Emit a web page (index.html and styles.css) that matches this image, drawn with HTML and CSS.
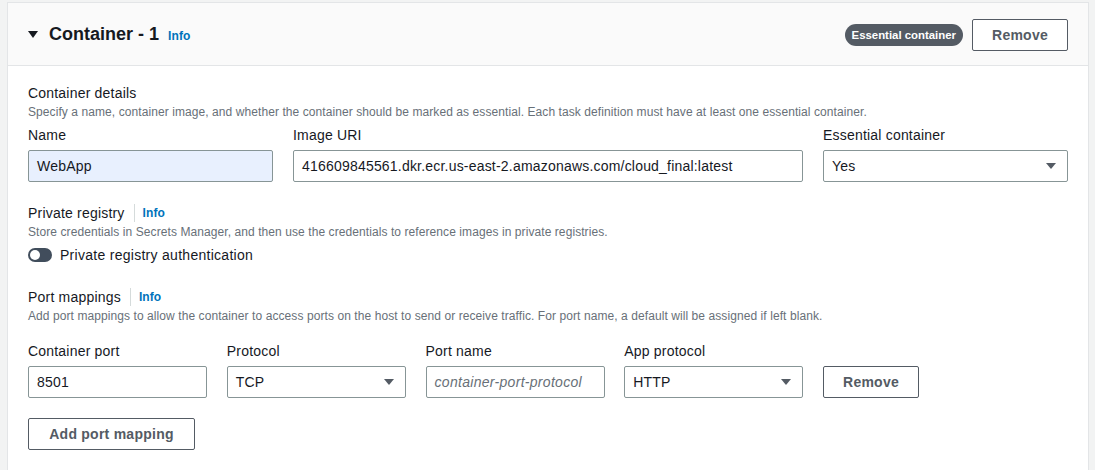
FILE: index.html
```html
<!DOCTYPE html>
<html lang="en">
<head>
<meta charset="utf-8">
<title>Container - 1</title>
<link rel="stylesheet" href="styles.css">
</head>
<body>
<div class="card">
  <div class="card-header">
    <div class="title-group">
      <svg class="caret" width="10" height="7" viewBox="0 0 10 7"><polygon points="0,0 10,0 5,7" fill="#16191f"/></svg>
      <h2 class="title">Container - 1</h2>
      <a class="info info-title">Info</a>
    </div>
    <div class="header-actions">
      <span class="badge">Essential container</span>
      <button class="btn btn-header">Remove</button>
    </div>
  </div>
  <div class="card-body">
    <section class="section">
      <div class="section-title">Container details</div>
      <div class="section-desc">Specify a name, container image, and whether the container should be marked as essential. Each task definition must have at least one essential container.</div>
      <div class="grid-top">
        <div class="field">
          <label class="label">Name</label>
          <div class="input autofill">WebApp</div>
        </div>
        <div class="field">
          <label class="label">Image URI</label>
          <div class="input">416609845561.dkr.ecr.us-east-2.amazonaws.com/cloud_final:latest</div>
        </div>
        <div class="field">
          <label class="label">Essential container</label>
          <div class="input select">Yes<svg class="arrow" width="10" height="6" viewBox="0 0 10 6"><polygon points="0,0 10,0 5,6" fill="#545b64"/></svg></div>
        </div>
      </div>
    </section>

    <section class="section section-gap-1">
      <div class="section-title">Private registry<span class="sep"></span><a class="info">Info</a></div>
      <div class="section-desc">Store credentials in Secrets Manager, and then use the credentials to reference images in private registries.</div>
      <div class="toggle-row">
        <span class="toggle"><span class="knob"></span></span>
        <span class="toggle-label">Private registry authentication</span>
      </div>
    </section>

    <section class="section section-gap-2">
      <div class="section-title">Port mappings<span class="sep"></span><a class="info">Info</a></div>
      <div class="section-desc">Add port mappings to allow the container to access ports on the host to send or receive traffic. For port name, a default will be assigned if left blank.</div>
      <div class="grid-ports">
        <div class="field">
          <label class="label">Container port</label>
          <div class="input">8501</div>
        </div>
        <div class="field">
          <label class="label">Protocol</label>
          <div class="input select">TCP<svg class="arrow" width="10" height="6" viewBox="0 0 10 6"><polygon points="0,0 10,0 5,6" fill="#545b64"/></svg></div>
        </div>
        <div class="field">
          <label class="label">Port name</label>
          <div class="input placeholder">container-port-protocol</div>
        </div>
        <div class="field">
          <label class="label">App protocol</label>
          <div class="input select">HTTP<svg class="arrow" width="10" height="6" viewBox="0 0 10 6"><polygon points="0,0 10,0 5,6" fill="#545b64"/></svg></div>
        </div>
        <div class="field field-btn">
          <button class="btn btn-row">Remove</button>
        </div>
      </div>
      <button class="btn btn-add">Add port mapping</button>
    </section>
  </div>
</div>
</body>
</html>
```

FILE: styles.css
```css
html, body {
  margin: 0;
  padding: 0;
}
body {
  background: #f2f3f3;
  font-family: "Liberation Sans", Arial, sans-serif;
  color: #16191f;
  height: 470px;
  overflow: hidden;
}
.card {
  margin: 2px 6px 0 7px;
  background: #ffffff;
  border: 1px solid #e3e5e7;
  border-bottom: none;
  height: 480px;
}
.card-header {
  height: 62px;
  background: #fafafa;
  border-bottom: 1px solid #e3e5e7;
  display: flex;
  align-items: center;
  justify-content: space-between;
  padding: 0 20px 0 20px;
}
.title-group {
  display: flex;
  align-items: baseline;
}
.caret {
  align-self: center;
  margin-right: 11px;
  margin-top: 1px;
}
.title {
  margin: 0;
  font-size: 18px;
  font-weight: 700;
  line-height: 22px;
  color: #16191f;
}
.info {
  color: #0073bb;
  font-weight: 700;
  font-size: 12px;
  letter-spacing: 0.1px;
  text-decoration: none;
}
.info-title {
  margin-left: 9px;
}
.header-actions {
  display: flex;
  align-items: center;
  gap: 9px;
  margin-top: 1px;
}
.badge {
  display: inline-flex;
  align-items: center;
  height: 22px;
  padding: 0 7px;
  border-radius: 11px;
  background: #545b64;
  color: #ffffff;
  font-size: 11.4px;
  font-weight: 700;
  box-sizing: border-box;
}
.btn {
  font-family: inherit;
  background: #ffffff;
  border: 1px solid #545b64;
  border-radius: 2px;
  color: #545b64;
  font-size: 14px;
  font-weight: 700;
  letter-spacing: 0.25px;
  height: 32px;
  padding: 0;
  box-sizing: border-box;
}
.btn-header {
  width: 96px;
}
.card-body {
  padding: 17px 20px 0 20px;
}
.section-title {
  font-size: 14px;
  line-height: 20px;
  letter-spacing: 0.2px;
  color: #16191f;
  display: flex;
  align-items: center;
  margin-bottom: 1px;
}
.sep {
  display: inline-block;
  width: 1px;
  height: 18px;
  background: #d5dbdb;
  margin: 0 8px 0 9px;
}
.section-desc {
  font-size: 12px;
  line-height: 16px;
  letter-spacing: 0.08px;
  color: #687078;
}
.section-gap-1 {
  margin-top: 21px;
}
.section-gap-2 {
  margin-top: 22px;
}
.grid-top {
  display: grid;
  grid-template-columns: 245px 510px 245px;
  column-gap: 20px;
  margin-top: 5px;
}
.field {
  display: flex;
  flex-direction: column;
}
.label {
  font-size: 14px;
  line-height: 20px;
  letter-spacing: 0.2px;
  color: #16191f;
  margin-bottom: 5px;
}
.input {
  height: 32px;
  box-sizing: border-box;
  border: 1px solid #879596;
  border-radius: 2px;
  padding: 0 8px;
  font-size: 14px;
  letter-spacing: 0.2px;
  display: flex;
  align-items: center;
  color: #16191f;
  background: #ffffff;
  white-space: nowrap;
  overflow: hidden;
}
.autofill {
  background: #e8f0fe;
}
.select {
  justify-content: space-between;
  padding-right: 11px;
}
.placeholder {
  font-style: italic;
  color: #687078;
  letter-spacing: 0.3px;
}
.toggle-row {
  display: flex;
  align-items: center;
  margin-top: 5px;
  height: 20px;
}
.toggle {
  width: 24px;
  height: 14px;
  border-radius: 7px;
  background: #414d5c;
  position: relative;
  margin-right: 8px;
  flex: none;
}
.knob {
  position: absolute;
  left: 2px;
  top: 2px;
  width: 10px;
  height: 10px;
  border-radius: 50%;
  background: #ffffff;
}
.toggle-label {
  font-size: 14px;
  line-height: 20px;
  letter-spacing: 0.28px;
}
.grid-ports {
  display: grid;
  grid-template-columns: 179px 179px 179px 179px 96px;
  column-gap: 19.75px;
  margin-top: 17px;
}
.field-btn {
  justify-content: flex-end;
}
.btn-row {
  width: 96px;
}
.btn-add {
  margin-top: 20px;
  width: 167px;
}
```
